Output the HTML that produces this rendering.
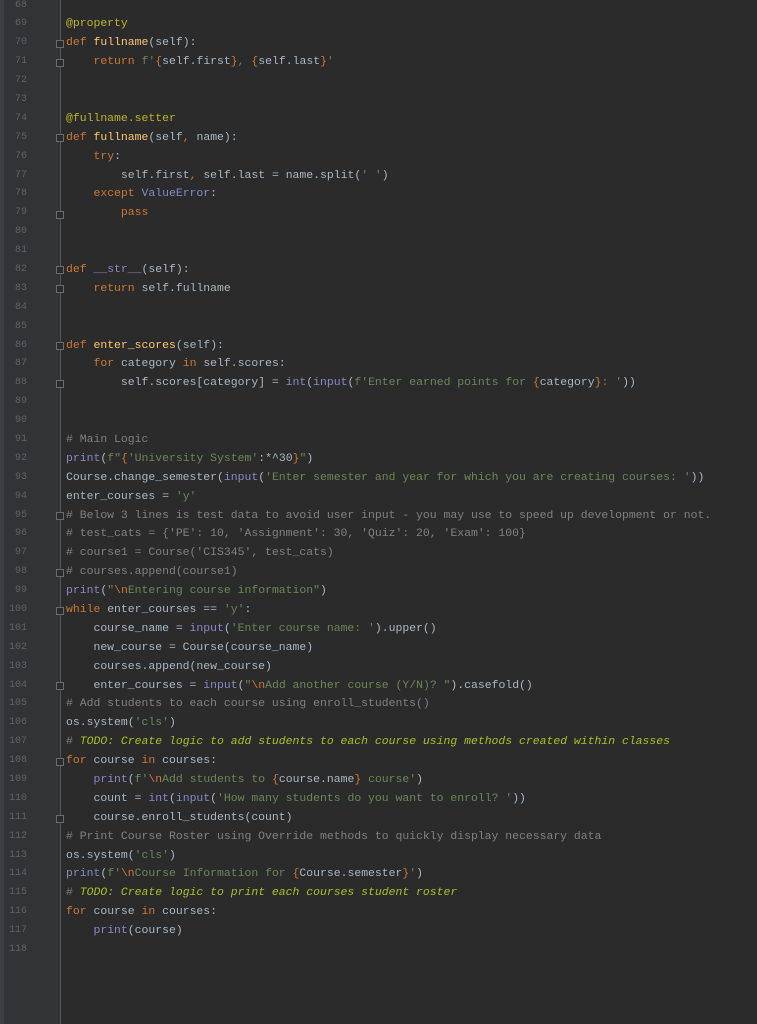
<!DOCTYPE html>
<html><head><meta charset="utf-8"><style>
html,body{margin:0;padding:0;width:757px;height:1024px;overflow:hidden;background:#2b2b2b;}
.strip{position:absolute;left:0;top:0;width:4px;height:1024px;background:#3c3f41;}
.gut{position:absolute;left:4px;top:0;width:56px;height:1024px;background:#313335;}
.sep{position:absolute;left:60px;top:0;width:1px;height:1024px;background:#555555;}
.nums{position:absolute;left:0;width:27px;top:-3.5px;text-align:right;font:10px/18.9px "Liberation Mono",monospace;color:#606366;}
.code{position:absolute;left:66px;top:-3.5px;font:11.45px/18.9px "Liberation Mono",monospace;color:#a9b7c6;white-space:normal;}
.code div{white-space:pre;}
.code div,.nums div{height:18.9px;}
.k{color:#cc7832}.s{color:#6a8759}.c{color:#808080}.d{color:#bbb529}.f{color:#ffc66d}.sf{color:#a9b7c6}.b{color:#8888c6}.n{color:#6897bb}.t{color:#a8c023;font-style:italic}
.fold{position:absolute;left:56px;width:8px;height:8px;border:1px solid #6b6b6b;box-sizing:border-box;background:#2b2b2b;}
</style></head><body>
<div class="strip"></div><div class="gut"></div><div class="sep"></div>
<div class="nums"><div>68</div><div>69</div><div>70</div><div>71</div><div>72</div><div>73</div><div>74</div><div>75</div><div>76</div><div>77</div><div>78</div><div>79</div><div>80</div><div>81</div><div>82</div><div>83</div><div>84</div><div>85</div><div>86</div><div>87</div><div>88</div><div>89</div><div>90</div><div>91</div><div>92</div><div>93</div><div>94</div><div>95</div><div>96</div><div>97</div><div>98</div><div>99</div><div>100</div><div>101</div><div>102</div><div>103</div><div>104</div><div>105</div><div>106</div><div>107</div><div>108</div><div>109</div><div>110</div><div>111</div><div>112</div><div>113</div><div>114</div><div>115</div><div>116</div><div>117</div><div>118</div></div>
<div class="fold" style="top:40px"></div><div class="fold" style="top:59px"></div>
<div class="fold" style="top:134px"></div><div class="fold" style="top:211px"></div>
<div class="fold" style="top:266px"></div><div class="fold" style="top:285px"></div>
<div class="fold" style="top:342px"></div><div class="fold" style="top:380px"></div>
<div class="fold" style="top:512px"></div><div class="fold" style="top:569px"></div>
<div class="fold" style="top:607px"></div><div class="fold" style="top:682px"></div>
<div class="fold" style="top:758px"></div><div class="fold" style="top:815px"></div>
<div class="code"><div></div><div><span class="d">@property</span></div><div><span class="k">def </span><span class="f">fullname</span>(<span class="sf">self</span>):</div><div>    <span class="k">return </span><span class="s">f'</span><span class="k">{</span><span class="sf">self</span>.first<span class="k">}</span><span class="s">, </span><span class="k">{</span><span class="sf">self</span>.last<span class="k">}</span><span class="s">'</span></div><div></div><div></div><div><span class="d">@fullname.setter</span></div><div><span class="k">def </span><span class="f">fullname</span>(<span class="sf">self</span><span class="k">, </span>name):</div><div>    <span class="k">try</span>:</div><div>        <span class="sf">self</span>.first<span class="k">, </span><span class="sf">self</span>.last = name.split(<span class="s">' '</span>)</div><div>    <span class="k">except </span><span class="b">ValueError</span>:</div><div>        <span class="k">pass</span></div><div></div><div></div><div><span class="k">def </span><span class="b">__str__</span>(<span class="sf">self</span>):</div><div>    <span class="k">return </span><span class="sf">self</span>.fullname</div><div></div><div></div><div><span class="k">def </span><span class="f">enter_scores</span>(<span class="sf">self</span>):</div><div>    <span class="k">for </span>category <span class="k">in </span><span class="sf">self</span>.scores:</div><div>        <span class="sf">self</span>.scores[category] = <span class="b">int</span>(<span class="b">input</span>(<span class="s">f'Enter earned points for </span><span class="k">{</span>category<span class="k">}</span><span class="s">: '</span>))</div><div></div><div></div><div><span class="c"># Main Logic</span></div><div><span class="b">print</span>(<span class="s">f"</span><span class="k">{</span><span class="s">'University System'</span>:*^30<span class="k">}</span><span class="s">"</span>)</div><div>Course.change_semester(<span class="b">input</span>(<span class="s">'Enter semester and year for which you are creating courses: '</span>))</div><div>enter_courses = <span class="s">'y'</span></div><div><span class="c"># Below 3 lines is test data to avoid user input - you may use to speed up development or not.</span></div><div><span class="c"># test_cats = {'PE': 10, 'Assignment': 30, 'Quiz': 20, 'Exam': 100}</span></div><div><span class="c"># course1 = Course('CIS345', test_cats)</span></div><div><span class="c"># courses.append(course1)</span></div><div><span class="b">print</span>(<span class="s">"</span><span class="k">\n</span><span class="s">Entering course information"</span>)</div><div><span class="k">while </span>enter_courses == <span class="s">'y'</span>:</div><div>    course_name = <span class="b">input</span>(<span class="s">'Enter course name: '</span>).upper()</div><div>    new_course = Course(course_name)</div><div>    courses.append(new_course)</div><div>    enter_courses = <span class="b">input</span>(<span class="s">"</span><span class="k">\n</span><span class="s">Add another course (Y/N)? "</span>).casefold()</div><div><span class="c"># Add students to each course using enroll_students()</span></div><div>os.system(<span class="s">'cls'</span>)</div><div><span class="c"># </span><span class="t">TODO: Create logic to add students to each course using methods created within classes</span></div><div><span class="k">for </span>course <span class="k">in </span>courses:</div><div>    <span class="b">print</span>(<span class="s">f'</span><span class="k">\n</span><span class="s">Add students to </span><span class="k">{</span>course.name<span class="k">}</span><span class="s"> course'</span>)</div><div>    count = <span class="b">int</span>(<span class="b">input</span>(<span class="s">'How many students do you want to enroll? '</span>))</div><div>    course.enroll_students(count)</div><div><span class="c"># Print Course Roster using Override methods to quickly display necessary data</span></div><div>os.system(<span class="s">'cls'</span>)</div><div><span class="b">print</span>(<span class="s">f'</span><span class="k">\n</span><span class="s">Course Information for </span><span class="k">{</span>Course.semester<span class="k">}</span><span class="s">'</span>)</div><div><span class="c"># </span><span class="t">TODO: Create logic to print each courses student roster</span></div><div><span class="k">for </span>course <span class="k">in </span>courses:</div><div>    <span class="b">print</span>(course)</div><div></div></div>
</body></html>
